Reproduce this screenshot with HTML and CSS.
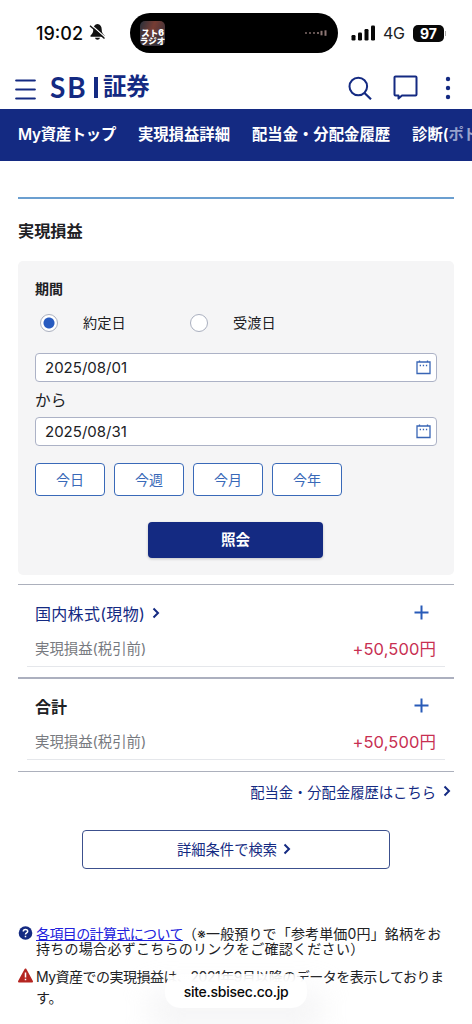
FILE: index.html
```html
<!DOCTYPE html>
<html lang="ja">
<head>
<meta charset="utf-8">
<meta name="viewport" content="width=device-width, initial-scale=1">
<title>実現損益</title>
<link rel="stylesheet" href="styles.css">
</head>
<body>
<div class="screen">
  <div class="status">
    <span class="clock">19:02</span>
    <svg class="bell" width="17" height="18" viewBox="0 0 17 18"><path d="M8.500 1C5.800 1.300 4.300 3.400 4.300 6.300c0 3.500-1 4.700-2.800 6.200v1.200h14v-1.200c-1.800-1.500-2.800-2.700-2.800-6.200 0-2.900-1.500-5-4.200-5.300zM6 14.700h5c-.4 2.600-4.600 2.600-5 0z" fill="#111"/><path d="M2 1.700l14.500 12.800" stroke="#fff" stroke-width="1.200"/><path d="M1 2.700l14.500 12.800" stroke="#111" stroke-width="1.400"/></svg>
    <div class="island">
      <div class="cover"><span>スト6</span><span>ラジオ</span></div>
      <svg width="24" height="8" viewBox="0 0 24 8" fill="#8d7775"><circle cx="2" cy="4" r=".9"/><circle cx="6" cy="4" r=".9"/><circle cx="10" cy="4" r=".9"/><circle cx="14" cy="4" r="1.100"/><rect x="16.500" y="1.800" width="2" height="4.500"/><rect x="20.500" y="1.300" width="2" height="5.500"/></svg>
    </div>
    <svg class="signal" width="25" height="16" viewBox="0 0 25 16" fill="#080808"><rect x=".5" y="10" width="4" height="5.500" rx="1.200"/><rect x="7" y="7.500" width="4" height="8" rx="1.200"/><rect x="13.500" y="4" width="4" height="11.500" rx="1.200"/><rect x="20" y=".5" width="4" height="15" rx="1.200"/></svg>
    <span class="network">4G</span>
    <span class="battery">97</span><i class="battery-tip"></i>
  </div>

  <header class="header">
    <svg class="menu" width="21" height="21" viewBox="0 0 21 21" stroke="#142a82" stroke-width="2.200" stroke-linecap="round"><path d="M1.200 1.500h18.600M1.200 10.500h18.600M1.200 19.500h18.600"/></svg>
    <div class="logo"><span class="logo-latin">SB</span><i class="logo-bar"></i><span class="logo-kanji">証券</span></div>
    <svg class="search" width="24" height="24" viewBox="0 0 24 24" fill="none" stroke="#142a82" stroke-width="2"><circle cx="10.300" cy="10.500" r="8.800"/><path d="M16.500 17l6.500 6.300" stroke-width="2.200"/></svg>
    <svg class="chat" width="25" height="25" viewBox="0 0 25 25" fill="none" stroke="#142a82" stroke-width="2" stroke-linejoin="round"><path d="M2.500 1.500h20a1 1 0 0 1 1 1v17a1 1 0 0 1-1 1H9l-3.500 3v-3h-3a1 1 0 0 1-1-1v-17a1 1 0 0 1 1-1z"/></svg>
    <svg class="more" width="6" height="24" viewBox="0 0 6 24" fill="#142a82"><circle cx="3" cy="3" r="2.200"/><circle cx="3" cy="12" r="2.200"/><circle cx="3" cy="21" r="2.200"/></svg>
  </header>

  <nav class="nav">
    <a>My資産トップ</a><a>実現損益詳細</a><a>配当金・分配金履歴</a><a>診断(<span class="nav-faded">ポト</span></a>
  </nav>

  <main class="main">
    <h1 class="title">実現損益</h1>
    <section class="card">
      <h2 class="label">期間</h2>
      <div class="radios">
        <i class="radio checked"></i><span class="radio-text">約定日</span>
        <i class="radio"></i><span class="radio-text">受渡日</span>
      </div>
      <div class="field"><span>2025/08/01</span><svg width="15" height="15" viewBox="0 0 15 15" fill="none" stroke="#3865b5" stroke-width="1.300"><path d="M1 2h13v11.500H1zM3.500.5V2M11.500.5V2"/><path d="M3.700 5.500h1.300M6.800 5.500h1.300M9.900 5.500h1.300"/></svg></div>
      <div class="from">から</div>
      <div class="field"><span>2025/08/31</span><svg width="15" height="15" viewBox="0 0 15 15" fill="none" stroke="#3865b5" stroke-width="1.300"><path d="M1 2h13v11.500H1zM3.500.5V2M11.500.5V2"/><path d="M3.700 5.500h1.300M6.800 5.500h1.300M9.900 5.500h1.300"/></svg></div>
      <div class="ranges"><a>今日</a><a>今週</a><a>今月</a><a>今年</a></div>
      <a class="submit">照会</a>
    </section>

    <section class="group">
      <div class="group-head"><span class="group-link">国内株式(現物)</span><svg class="chevron" width="8" height="12" viewBox="0 0 8 12"><path d="M1.500 1.500L6 6l-4.500 4.500"/></svg><svg class="plus" width="15" height="15" viewBox="0 0 15 15"><path d="M.5 7.500h14M7.500.5v14"/></svg></div>
      <div class="group-row"><span class="row-label">実現損益(税引前)</span><span class="amount">+50,500円</span></div>
    </section>
    <section class="group total">
      <div class="group-head"><b>合計</b><svg class="plus" width="15" height="15" viewBox="0 0 15 15"><path d="M.5 7.500h14M7.500.5v14"/></svg></div>
      <div class="group-row"><span class="row-label">実現損益(税引前)</span><span class="amount">+50,500円</span></div>
    </section>

    <div class="history"><span>配当金・分配金履歴はこちら</span><svg class="chevron" width="8" height="12" viewBox="0 0 8 12"><path d="M1.500 1.500L6 6l-4.500 4.500"/></svg></div>
    <a class="detail"><span>詳細条件で検索</span><svg class="chevron" width="8" height="12" viewBox="0 0 8 12"><path d="M1.500 1.500L6 6l-4.500 4.500"/></svg></a>

    <div class="note">
      <svg width="15" height="15" viewBox="0 0 15 15"><circle cx="7.500" cy="7" r="6.800" fill="#142a82"/><path d="M5.300 5.500c0-2.800 4.400-2.700 4.400-.2 0 1.700-2.200 1.600-2.200 3.200M7.500 9.700v1.600" fill="none" stroke="#fff" stroke-width="1.500"/></svg>
      <p><a class="formula">各項目の計算式について</a><span class="paren">（※一般預りで「参考単価0円」銘柄をお</span><br><span class="second">持ちの場合必ずこちらのリンクをご確認ください）</span></p>
    </div>
    <div class="note warning">
      <svg width="15" height="15" viewBox="0 0 15 15"><path d="M7.500 1.500L14 13.500H1z" fill="#b52520" stroke="#b52520" stroke-width="2" stroke-linejoin="round"/><path d="M7.500 4.500v5M7.500 10.800v1.500" stroke="#fff" stroke-width="1.500"/></svg>
      <p><span class="warn-text">My資産での実現損益は、2021年9月以降のデータを表示しておりま</span><br>す。</p>
    </div>
  </main>
  <div class="fade"></div>
  <div class="url">site.sbisec.co.jp</div>
</div>
</body>
</html>
```
FILE: styles.css
```css
* { box-sizing: border-box; }
body {
  margin: 0;
  background: #fff;
  color: #202124;
  font-family: Inter, "Noto Sans CJK JP", sans-serif;
}
h1, h2, p { margin: 0; }
svg { display: block; flex: none; }
.screen { position: relative; width: 472px; height: 1024px; overflow: hidden; }

.status { display: flex; align-items: center; height: 66px; padding-left: 36px; }
.clock { width: 50px; font-size: 18px; font-weight: 500; white-space: nowrap; color: #080808; }
.bell { margin-left: 3px; margin-top: -2px; }
.island {
  display: flex; align-items: center; justify-content: space-between;
  width: 208px; height: 40px; margin-left: 24px; padding: 0 10px;
  border-radius: 20px; background: #000;
}
.cover {
  display: flex; flex-direction: column; justify-content: flex-end; align-items: center;
  width: 25px; height: 25px; border-radius: 5px; overflow: hidden;
  background: linear-gradient(#0000 35%, #30313ccc), linear-gradient(110deg, #28313c, #773c33 45%, #30313c);
  color: #fff; font-size: 8.5px; font-weight: 900; line-height: 8.5px; white-space: nowrap;
}
.signal { margin-left: 13px; }
.network { width: 22px; margin-left: 7px; font-size: 16px; letter-spacing: -.4px; }
.battery {
  width: 31px; height: 17px; margin-left: 8px; border-radius: 5px;
  background: #080808; color: #fff; text-align: center;
  font-size: 14px; font-weight: 700; line-height: 17px;
}
.battery-tip { width: 1px; height: 5px; margin-left: 1px; background: #aaa; }

.header { display: flex; align-items: center; height: 43px; padding-left: 15px; }
.menu { margin-top: 3px; }
.logo { display: flex; align-items: center; width: 100px; height: 28px; margin-left: 14px; margin-top: -1px; color: #142a82; }
.logo-latin { width: 41px; font: 700 28px/28px Lato, sans-serif; letter-spacing: 2px; }
.logo-bar { width: 4px; height: 21px; margin: 1px 5px 0 3px; background: #142a82; }
.logo-kanji { font-size: 23.5px; font-weight: 700; line-height: 28px; letter-spacing: -.3px; white-space: nowrap; }
.search { margin-left: 198px; }
.chat { margin-left: 21px; margin-top: -1px; }
.more { margin-left: 27px; margin-top: 1px; }

.nav {
  display: flex; gap: 22px; height: 52px; padding-left: 18px; overflow: hidden;
  background: #142a82; color: #fff;
  font-size: 15.35px; font-weight: 600; line-height: 52px; white-space: nowrap;
}
.nav a { flex: none; }
.nav a:first-child { letter-spacing: -.3px; }
.nav-faded { color: #97a1cc; letter-spacing: -1px; }

.main { padding: 36px 18px 0; }
.title {
  height: 64px; border-top: 2px solid #6b9fd0;
  font-size: 16.2px; font-weight: 700; line-height: 64px;
}
.card {
  height: 314px; padding: 17px 17px 0;
  border-radius: 5px; background: #f5f5f6;
}
.label { height: 22px; font-size: 14px; font-weight: 700; line-height: 22px; }
.radios { display: flex; align-items: center; height: 45px; padding-left: 5px; font-size: 14.2px; line-height: 20px; }
.radio { width: 18px; height: 18px; margin-top: 1px; border: 1px solid #aab0bf; border-radius: 50%; background: #fff; }
.checked { background: radial-gradient(circle, #285bc0 5px, #fff 6px); }
.radio-text { width: 106px; margin-left: 25px; margin-right: 1px; }
.radio-text:last-child { width: auto; }
.field {
  display: flex; align-items: center; justify-content: space-between;
  width: 402px; height: 29px; margin-top: 8px; padding: 0 5px 0 9px;
  border: 1px solid #acb2c6; border-radius: 4px; background: #fff; font-size: 15px;
}
.from { height: 35px; font-size: 15.7px; line-height: 37px; }
.from + .field { margin-top: 0; }
.ranges { display: flex; gap: 9px; margin-top: 17px; }
.ranges a {
  width: 70px; height: 33px; border: 1px solid #3969b8; border-radius: 4px;
  background: #fff; color: #3969b8; text-align: center; font-size: 14px; line-height: 31px;
}
.submit {
  display: block; width: 175px; height: 36px; margin: 26px 0 0 113px;
  border-radius: 4px; background: #142a82; color: #fff; box-shadow: 0 1px 3px #0003;
  text-align: center; font-size: 14.5px; font-weight: 700; line-height: 35px;
}

.group { height: 94px; margin-top: 9px; padding: 12px 9px 0; border-top: 1px solid #acb0bc; }
.total { height: 95px; margin-top: -1px; padding-top: 11px; border-top: 2px solid #acb0bf; border-bottom: 1px solid #acb0bc; }
.group-head { display: flex; align-items: center; height: 31px; padding: 0 16px 0 8px; font-size: 16px; }
.group-link { color: #142a82; letter-spacing: .3px; }
.chevron { fill: none; stroke: #142a82; stroke-width: 2; }
.group-head .chevron { margin-left: 7px; }
.plus { margin-left: auto; margin-top: -1px; fill: none; stroke: #285bb8; stroke-width: 2; }
.group-row {
  display: flex; align-items: center; justify-content: space-between;
  height: 39px; padding: 1px 9px 0 8px; border-bottom: 1px solid #e5e7eb;
}
.row-label { color: #777a80; font-size: 14.4px; }
.amount { color: #c82f52; font-size: 16.5px; letter-spacing: .1px; }
.history {
  display: flex; align-items: center; justify-content: flex-end; gap: 7px;
  height: 40px; padding-right: 3px; padding-bottom: 2px; color: #142a82; font-size: 14.3px;
}
.detail {
  display: flex; align-items: center; justify-content: center; gap: 6px;
  width: 308px; height: 39px; margin: 18px 0 0 64px; padding-right: 4px; padding-bottom: 2px;
  border: 1px solid #3c508d; border-radius: 4px; color: #142a82; font-size: 14.3px;
}
.note { display: flex; gap: 3px; margin-top: 57px; font-size: 14px; line-height: 15px; white-space: nowrap; }
.formula { color: #2020dd; text-decoration: underline; letter-spacing: -.62px; }
.paren { letter-spacing: .15px; }
.second { letter-spacing: .28px; }
.warning { margin-top: 10px; line-height: 21px; }
.warning svg { margin-top: 2px; }
.warn-text { letter-spacing: -.5px; }

.fade {
  position: absolute; left: 150px; top: 990px; width: 172px; height: 40px;
  background: #e5e5e8; opacity: .4; filter: blur(15px);
}
.url {
  position: absolute; left: 165px; top: 974px; width: 142px; height: 34px;
  border-radius: 15px; background: linear-gradient(#ffffffd8, #fff 25%);
  color: #080808; text-align: center; font-size: 14px; font-weight: 500; letter-spacing: -.25px; line-height: 35px;
}
```
